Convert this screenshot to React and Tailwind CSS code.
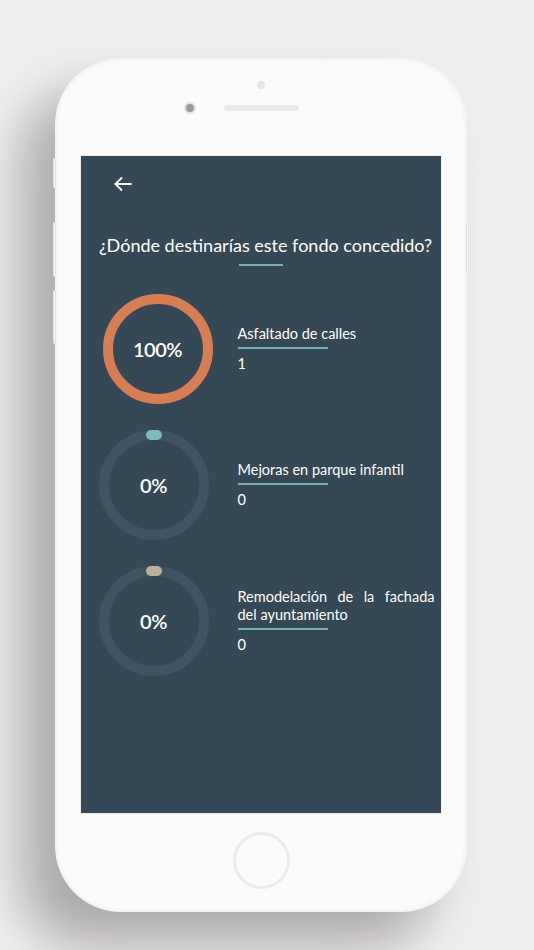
import React from "react";

const options = [
  { label: "Asfaltado de calles", votes: 1, percent: 100, color: "#d97d52", cap: "#d97d52", offset: "ml-[22px]" },
  { label: "Mejoras en parque infantil", votes: 0, percent: 0, color: "#d97d52", cap: "#78bcbe", offset: "ml-[18px]" },
  { label: "Remodelación de la fachada del ayuntamiento", votes: 0, percent: 0, color: "#d97d52", cap: "#bdb09e", offset: "ml-[18px]" },
];

const BackArrow = () => (
  <svg width="18" height="14" viewBox="0 0 18 14" fill="none" stroke="white" strokeWidth="1.8" strokeLinecap="round" strokeLinejoin="round">
    <path d="M17 7H1.5" />
    <path d="M7.5 1L1.5 7l6 6" />
  </svg>
);

const Donut = ({ percent, color, cap }) => {
  const r = 50;
  const c = 2 * Math.PI * r;
  return (
    <div className="relative w-[110px] h-[110px] shrink-0">
      <svg width="110" height="110" viewBox="0 0 110 110">
        <circle cx="55" cy="55" r={r} fill="none" stroke="#3e5462" strokeWidth="10" />
        {percent > 0 && (
          <circle
            cx="55"
            cy="55"
            r={r}
            fill="none"
            stroke={color}
            strokeWidth="10"
            strokeDasharray={`${(c * percent) / 100} ${c}`}
            transform="rotate(-90 55 55)"
          />
        )}
        {percent === 0 && <rect x="47" y="0" width="16" height="10" rx="5" fill={cap} />}
      </svg>
      <div className="absolute inset-0 flex items-center justify-center text-white text-[20px] font-semibold tracking-tight">
        {percent}%
      </div>
    </div>
  );
};

const OptionRow = ({ option }) => (
  <div className="flex items-center h-[136px]">
    <div className={option.offset}>
      <Donut percent={option.percent} color={option.color} cap={option.cap} />
    </div>
    <div className={`flex flex-col ${option.percent === 100 ? "ml-[25px]" : "ml-[29px]"} w-[197px]`}>
      <p className="text-white text-[14.5px] leading-[18px] text-justify">{option.label}</p>
      <div className="mt-[4px] h-[2px] w-[90px] bg-[#6fb3b7]" />
      <p className="mt-[6px] text-white text-[14.5px] leading-[18px]">{option.votes}</p>
    </div>
  </div>
);

export default function App() {
  return (
    <div
      className="w-[534px] h-[950px] overflow-hidden bg-[#efeeed] pt-[58px] pl-[55px]"
      style={{ fontFamily: "Lato, 'Open Sans', sans-serif" }}
    >
      <div className="relative w-[412px] h-[854px] rounded-[66px] bg-[#fbfbfb] shadow-[-34px_34px_50px_rgba(0,0,0,0.28),inset_0_0_6px_rgba(0,0,0,0.08)] flex flex-col items-center">
        {/* side buttons */}
        <div className="absolute left-[-2px] top-[100px] w-[3px] h-[30px] rounded-full bg-[#f4f4f4] border border-[#e2e2e2]" />
        <div className="absolute left-[-2px] top-[164px] w-[3px] h-[55px] rounded-full bg-[#f4f4f4] border border-[#e2e2e2]" />
        <div className="absolute left-[-2px] top-[232px] w-[3px] h-[54px] rounded-full bg-[#f4f4f4] border border-[#e2e2e2]" />
        <div className="absolute right-[-2px] top-[163px] w-[3px] h-[56px] rounded-full bg-[#f4f4f4] border border-[#e2e2e2]" />

        {/* top bezel */}
        <div className="h-[97px] w-full flex flex-col">
          <div className="mt-[23px] self-center w-[8px] h-[8px] rounded-full bg-[#e6e6e6]" />
          <div className="mt-[13px] ml-[129px] flex items-center gap-[28px]">
            <div className="w-[12px] h-[12px] rounded-full bg-[#9c9c9c] border-[2px] border-[#e4e4e4]" />
            <div className="w-[75px] h-[6px] rounded-full bg-[#e9e9e9]" />
          </div>
        </div>

        {/* screen */}
        <div className="w-[362px] h-[659px] border border-[#ececec] ml-[-1px]">
          <div className="w-full h-full bg-[#354856] flex flex-col">
            <div className="h-[54px] flex items-center pl-[33px] pt-[1px]">
              <BackArrow />
            </div>
            <h1 className="mt-[24px] pl-[10px] text-center text-white text-[18px] leading-[22px]">
              ¿Dónde destinarías este fondo concedido?
            </h1>
            <div className="mt-[8px] mx-auto h-[2px] w-[44px] bg-[#6fb3b7]" />
            <div className="mt-[15px] flex flex-col">
              {options.map((o) => (
                <OptionRow key={o.label} option={o} />
              ))}
            </div>
          </div>
        </div>

        {/* home button */}
        <div className="mt-[18px] w-[57px] h-[57px] rounded-full border-[3px] border-[#ececec]" />
      </div>
    </div>
  );
}
